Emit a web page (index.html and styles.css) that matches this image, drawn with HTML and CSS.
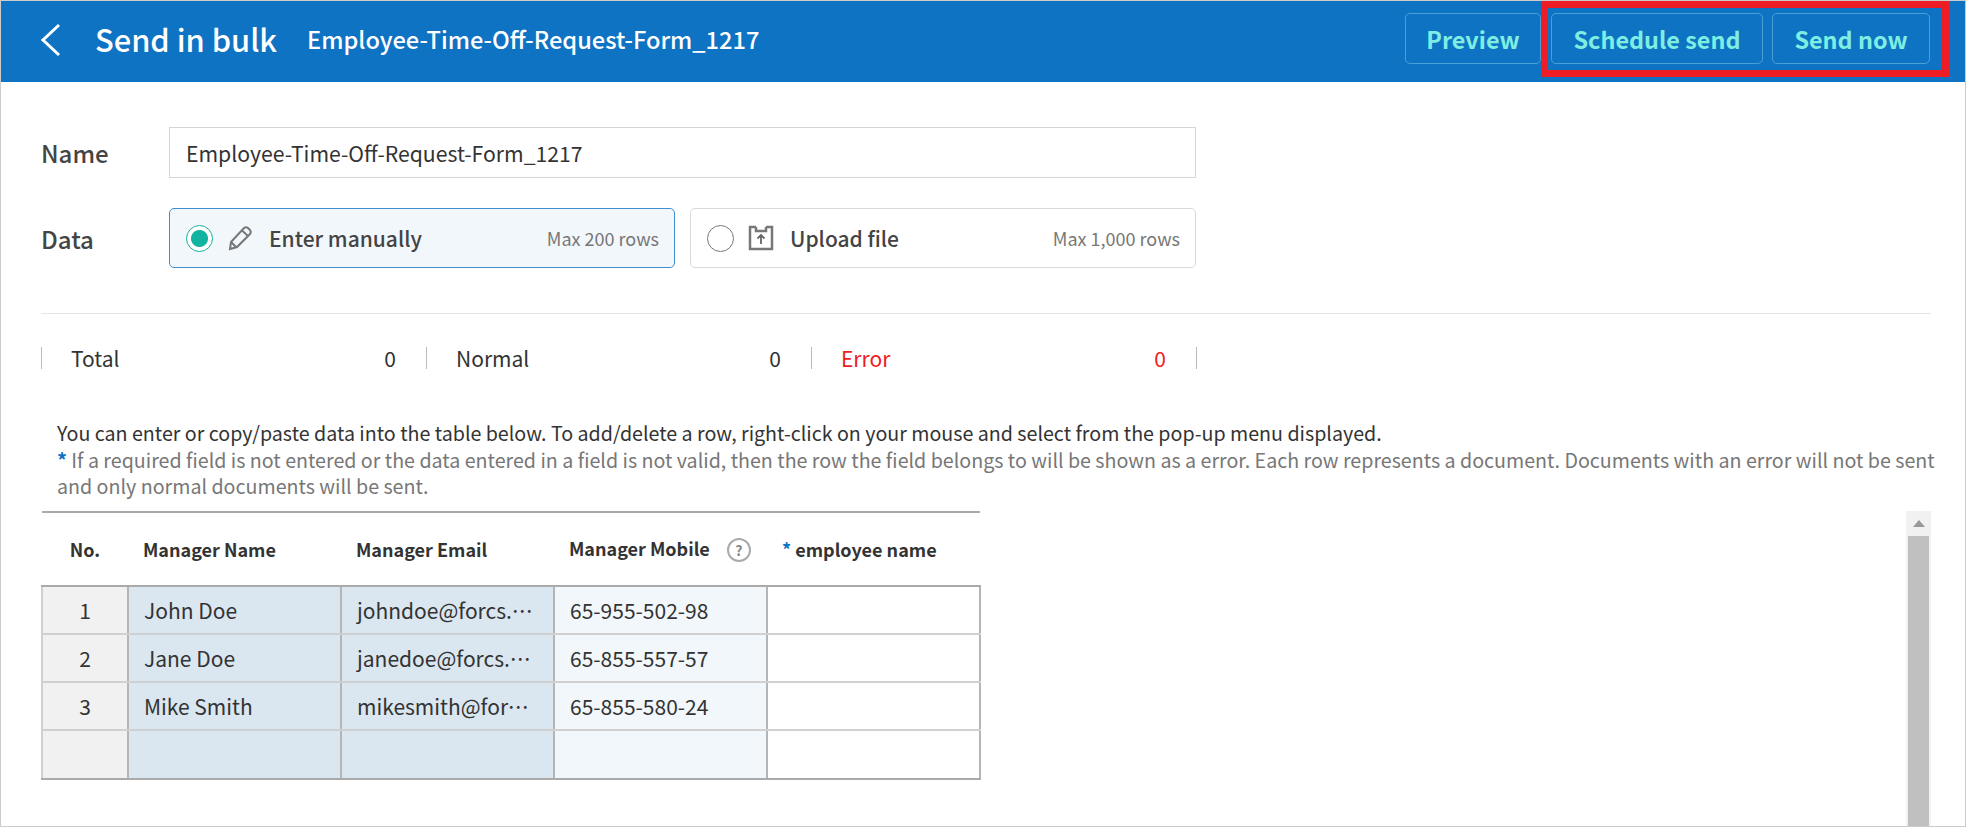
FILE: index.html
```html
<!DOCTYPE html>
<html>
	<head>
		<meta charset="UTF-8">
		<title>Send in bulk</title>
		<link rel="stylesheet" href="styles.css">
	</head>
	<body>
		<div class="page">
			<div class="top">
				<svg class="back" width="22" height="34" viewBox="0 0 22 34"><path d="M19 2 L3 17 L19 32" fill="none" stroke="#fff" stroke-width="3"/></svg>
				<span class="top-title">Send in bulk</span>
				<span class="top-name">Employee-Time-Off-Request-Form_1217</span>
				<div class="top-actions">
					<a class="btn btn-preview">Preview</a>
					<div class="marked">
						<a class="btn btn-schedule">Schedule send</a>
						<a class="btn btn-send">Send now</a>
					</div>
				</div>
			</div>
			<div class="main">
				<div class="form-row name-row">
					<label>Name</label>
					<input class="name-input" type="text" value="Employee-Time-Off-Request-Form_1217">
				</div>
				<div class="form-row data-row">
					<label>Data</label>
					<div class="option option-on">
						<span class="radio"></span>
						<svg class="opt-icon" width="26" height="26" viewBox="0 0 26 26"><path d="M3 24 L4 17 L17 3 Q19 1.500 21 3 L23 5 Q24.500 7 23 9 L10 22 Z M15 5.500 L21 11 M4 17 L9 22" fill="none" stroke="#777" stroke-width="2"/></svg>
						<span class="opt-name">Enter manually</span>
						<span class="opt-max">Max 200 rows</span>
					</div>
					<div class="option">
						<span class="radio"></span>
						<svg class="opt-icon" width="26" height="26" viewBox="0 0 26 26"><path d="M8 2 H2 V24 H24 V2 H18 M8 2 V6 H18 V2" fill="none" stroke="#777" stroke-width="2.500"/><path d="M13 19 V11 M9.500 13.500 L13 10 L16.500 13.500" fill="none" stroke="#666" stroke-width="1.800"/></svg>
						<span class="opt-name">Upload file</span>
						<span class="opt-max">Max 1,000 rows</span>
					</div>
				</div>
				<div class="stats">
					<div class="stat"><span>Total</span><span>0</span></div>
					<div class="stat"><span>Normal</span><span>0</span></div>
					<div class="stat stat-error"><span>Error</span><span>0</span></div>
				</div>
				<div class="notes">
					<p>You can enter or copy/paste data into the table below. To add/delete a row, right-click on your mouse and select from the pop-up menu displayed.</p>
					<p class="notes-sub"><span class="star">*</span> If a required field is not entered or the data entered in a field is not valid, then the row the field belongs to will be shown as a error. Each row represents a document. Documents with an error will not be sent and only normal documents will be sent.</p>
				</div>
				<div class="sheet">
					<table>
						<thead>
							<tr>
								<th class="c-no">No.</th>
								<th>Manager Name</th>
								<th>Manager Email</th>
								<th>Manager Mobile <span class="help">?</span></th>
								<th><span class="star">*</span> employee name</th>
							</tr>
						</thead>
						<tbody>
							<tr><td class="c-no">1</td><td class="sel">John Doe</td><td class="sel">johndoe@forcs.com</td><td class="pale">65-955-502-98</td><td></td></tr>
							<tr><td class="c-no">2</td><td class="sel">Jane Doe</td><td class="sel">janedoe@forcs.com</td><td class="pale">65-855-557-57</td><td></td></tr>
							<tr><td class="c-no">3</td><td class="sel">Mike Smith</td><td class="sel">mikesmith@forcs.com</td><td class="pale">65-855-580-24</td><td></td></tr>
							<tr><td class="c-no"></td><td class="sel"></td><td class="sel"></td><td class="pale"></td><td></td></tr>
						</tbody>
					</table>
					<div class="scroll">
						<div class="scroll-up"></div>
						<div class="scroll-thumb"></div>
					</div>
				</div>
			</div>
		</div>
	</body>
</html>
```

FILE: styles.css
```css
*{
	box-sizing: border-box;
}
body{
	margin: 0;
	padding: 0;
	background: #fff;
	font-family: "Noto Sans CJK KR", "Noto Sans", sans-serif;
	color: #333;
}
.page{
	width: 1966px;
	height: 827px;
	border: 1px solid #ccc;
	display: flex;
	flex-direction: column;
	overflow: hidden;
}
/* top bar */
.top{
	height: 81px;
	flex: none;
	background: #0f73c4;
	color: #fff;
	display: flex;
	align-items: flex-start;
	padding-left: 39px;
}
.back{
	margin-top: 22px;
}
.top-title{
	font-size: 30.800px;
	font-weight: 500;
	line-height: 76px;
	margin-left: 33px;
}
.top-name{
	font-size: 23.600px;
	font-weight: 500;
	line-height: 76px;
	margin-left: 30px;
}
.top-actions{
	margin-left: auto;
	margin-right: 16px;
	display: flex;
	align-items: flex-start;
}
.btn{
	height: 51px;
	margin-top: 12px;
	border: 1px solid #4a9fd6;
	border-radius: 5px;
	color: #7eeee2;
	font-size: 23.400px;
	font-weight: 700;
	line-height: 50px;
	text-align: center;
}
.btn-preview{
	width: 136px;
}
.marked{
	height: 76px;
	border: 7px solid #ee1c25;
	padding: 0 12px 0 3px;
	display: flex;
	gap: 9px;
}
.marked .btn{
	margin-top: 5px;
}
.btn-schedule{
	width: 212px;
}
.btn-send{
	width: 158px;
}
/* form */
.main{
	flex: 1;
	min-height: 0;
	padding: 0 34px 0 40px;
	display: flex;
	flex-direction: column;
}
.form-row{
	display: flex;
	align-items: center;
}
.form-row label{
	width: 128px;
	font-size: 24px;
	font-weight: 500;
	color: #444;
}
.name-row{
	margin-top: 45px;
}
.name-input{
	width: 1027px;
	height: 51px;
	border: 1px solid #d5d5d5;
	padding: 0 16px;
	font: 21.200px "Noto Sans CJK KR", "Noto Sans", sans-serif;
	color: #333;
}
.data-row{
	margin-top: 30px;
	gap: 0;
	padding-bottom: 45px;
	border-bottom: 1px solid #e6e6e6;
}
.option{
	width: 506px;
	height: 60px;
	margin-right: 15px;
	border: 1px solid #d9d9d9;
	border-radius: 5px;
	padding: 0 15px 0 16px;
	display: flex;
	align-items: center;
}
.option-on{
	background: #f2f7fb;
	border-color: #3d8fd1;
}
.radio{
	width: 27px;
	height: 27px;
	flex: none;
	border: 1px solid #777;
	border-radius: 50%;
	background: #fff;
}
.option-on .radio{
	border-color: #12b3a0;
	background: radial-gradient(circle, #12b3a0 0 8px, #fff 9px);
}
.opt-icon{
	margin-left: 14px;
}
.opt-name{
	margin-left: 16px;
	font-size: 21px;
	font-weight: 500;
	color: #444;
}
.opt-max{
	margin-left: auto;
	font-size: 18px;
	color: #777;
}
.stats{
	margin-top: 33px;
	display: flex;
	width: 1156px;
	border-right: 1px solid #bbb;
	height: 22px;
	align-items: center;
}
.stat{
	width: 385px;
	border-left: 1px solid #bbb;
	height: 22px;
	padding: 0 30px 0 29px;
	display: flex;
	justify-content: space-between;
	align-items: center;
	font-size: 21px;
	line-height: 22px;
}
.stat-error{
	color: #ee1c25;
}
/* notes */
.notes{
	margin-top: 51px;
	margin-right: -6px;
	padding-left: 16px;
	font-size: 19.650px;
	line-height: 26.500px;
}
.notes p{
	margin: 0;
}
.notes-sub{
	color: #777;
}
.star{
	color: #0f73c4;
	font-weight: 700;
}
/* sheet */
.sheet{
	flex: 1;
	min-height: 0;
	margin-top: 11px;
	display: flex;
	justify-content: space-between;
}
table{
	width: 940px;
	height: 269px;
	table-layout: fixed;
	border-collapse: collapse;
	border-top: 2px solid #aaa;
	font-size: 21px;
	align-self: flex-start;
}
th{
	height: 74px;
	padding: 0 0 0 15px;
	text-align: left;
	font-size: 18px;
	font-weight: 700;
	white-space: nowrap;
	border-bottom: 2px solid #aaa;
}
th.c-no{
	padding: 0;
	text-align: center;
}
td{
	height: 48px;
	padding: 0 15px;
	border: 2px solid #d0d0d0;
	border-right-color: #b5b5b5;
	white-space: nowrap;
	overflow: hidden;
	text-overflow: ellipsis;
}
tbody tr:last-child td{
	border-bottom-color: #aaa;
}
td.c-no{
	background: #f1f1f1;
	padding: 0;
	text-align: center;
}
.c-no{
	width: 86px;
}
td.sel{
	background: #dae6f0;
}
td.pale{
	background: #f2f7fb;
}
.help{
	display: inline-block;
	width: 24px;
	height: 24px;
	margin-left: 13px;
	border: 2px solid #aaa;
	border-radius: 50%;
	color: #888;
	font-size: 14px;
	line-height: 20px;
	text-align: center;
	vertical-align: 0;
}
.scroll{
	width: 25px;
	background: #f1f1f1;
}
.scroll-up{
	height: 25px;
	position: relative;
}
.scroll-up:after{
	content: "";
	position: absolute;
	left: 7px;
	top: 9px;
	border-left: 6px solid transparent;
	border-right: 6px solid transparent;
	border-bottom: 7px solid #999;
}
.scroll-thumb{
	height: 400px;
	margin: 0 2px;
	background: #c0c0c0;
}
```
